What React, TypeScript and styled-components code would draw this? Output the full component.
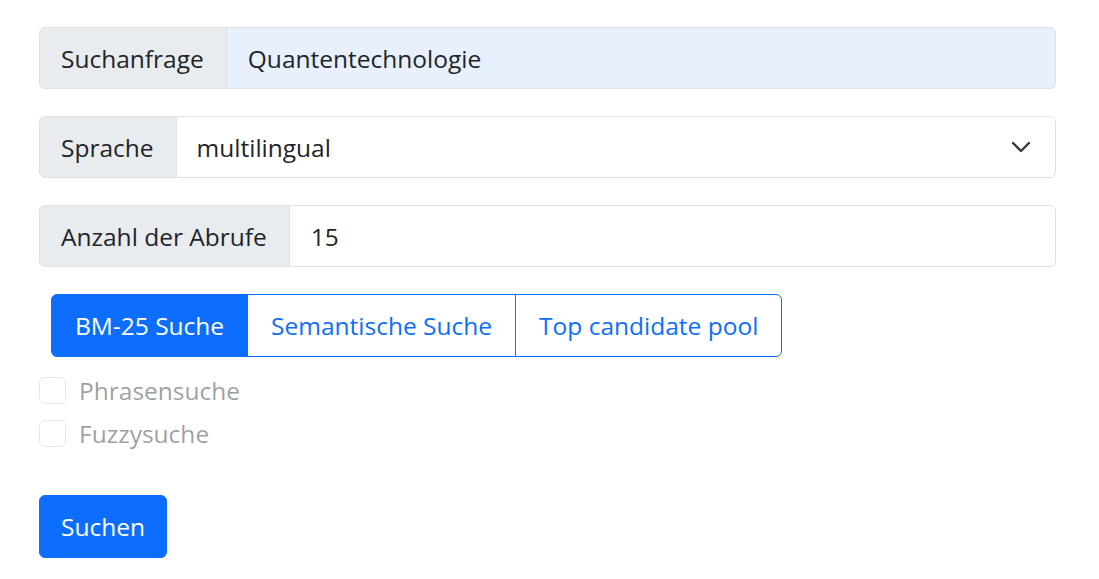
import React, { useState } from "react";
import styled, { createGlobalStyle } from "styled-components";

const GlobalStyle = createGlobalStyle`
  html, body {
    margin: 0;
    padding: 0;
    background: #fff;
  }
  body {
    font-family: "Open Sans", "Noto Sans", "Liberation Sans", sans-serif;
    color: #212529;
  }
  * {
    box-sizing: border-box;
  }
`;

const Page = styled.main`
  padding: 27px 43px 20px 39px;
  display: flex;
  flex-direction: column;
`;

const Form = styled.form`
  display: flex;
  flex-direction: column;
`;

const InputGroup = styled.div`
  display: flex;
  align-items: stretch;
  width: 100%;
  margin-bottom: 27px;
`;

const Addon = styled.span`
  flex: none;
  display: flex;
  align-items: center;
  padding: 13px 22px 11px 21px;
  font-size: 24.5px;
  line-height: 36px;
  color: #212529;
  background: #e9ecef;
  border: 1px solid #dee2e6;
  border-radius: 6px 0 0 6px;
  white-space: nowrap;
`;

const TextInput = styled.input<{ $filled?: boolean }>`
  flex: 1;
  min-width: 0;
  margin-left: -1px;
  padding: 13px 21px 11px;
  font: inherit;
  font-size: 24.5px;
  line-height: 36px;
  color: #212529;
  background: ${(p) => (p.$filled ? "#e8f0fe" : "#fff")};
  border: 1px solid #dee2e6;
  border-radius: 0 6px 6px 0;
  outline: none;
`;

const SelectWrap = styled.div`
  flex: 1;
  position: relative;
  display: flex;
  margin-left: -1px;
`;

const Select = styled.select`
  flex: 1;
  appearance: none;
  padding: 13px 60px 11px 20px;
  font: inherit;
  font-size: 24.5px;
  line-height: 36px;
  color: #212529;
  background: #fff;
  border: 1px solid #dee2e6;
  border-radius: 0 6px 6px 0;
  outline: none;
`;

const Chevron = styled.svg`
  position: absolute;
  right: 24px;
  top: 50%;
  width: 22px;
  height: 16px;
  transform: translateY(-50%);
  pointer-events: none;
`;

const ButtonGroup = styled.div`
  display: inline-flex;
  align-self: flex-start;
  margin-left: 12px;
  margin-bottom: 20px;
`;

const ToggleButton = styled.button<{ $active?: boolean }>`
  padding: 13px 23px 12px;
  font: inherit;
  font-size: 24.5px;
  line-height: 36px;
  color: ${(p) => (p.$active ? "#fff" : "#0d6efd")};
  background: ${(p) => (p.$active ? "#0d6efd" : "#fff")};
  border: 1px solid #0d6efd;
  border-radius: 0;
  cursor: pointer;
  & + & {
    margin-left: -1px;
  }
  &:first-child {
    border-radius: 6px 0 0 6px;
  }
  &:last-child {
    border-radius: 0 6px 6px 0;
  }
`;

const CheckRow = styled.label`
  display: flex;
  align-items: center;
  gap: 13px;
  height: 27px;
  margin-bottom: 16px;
  font-size: 24.5px;
  line-height: 36px;
  color: rgba(33, 37, 41, 0.45);
`;

const CheckBox = styled.input`
  appearance: none;
  margin: 0;
  width: 27px;
  height: 27px;
  border: 1px solid #e5e7ea;
  border-radius: 6px;
  background: #fff;
`;

const SubmitButton = styled.button`
  align-self: flex-start;
  margin-top: 32px;
  padding: 13px 21px 12px;
  font: inherit;
  font-size: 24.5px;
  line-height: 36px;
  color: #fff;
  background: #0d6efd;
  border: 1px solid #0d6efd;
  border-radius: 6px;
  cursor: pointer;
`;

const modes = ["BM-25 Suche", "Semantische Suche", "Top candidate pool"];

export default function App() {
  const [mode, setMode] = useState(0);
  return (
    <>
      <GlobalStyle />
      <Page>
        <Form onSubmit={(e) => e.preventDefault()}>
          <InputGroup>
            <Addon>Suchanfrage</Addon>
            <TextInput $filled defaultValue="Quantentechnologie" />
          </InputGroup>

          <InputGroup>
            <Addon>Sprache</Addon>
            <SelectWrap>
              <Select defaultValue="multilingual">
                <option value="multilingual">multilingual</option>
                <option value="de">deutsch</option>
                <option value="en">englisch</option>
              </Select>
              <Chevron viewBox="0 0 16 12" aria-hidden>
                <path
                  d="M2 3l6 6 6-6"
                  fill="none"
                  stroke="#343a40"
                  strokeWidth="1.8"
                  strokeLinecap="round"
                  strokeLinejoin="round"
                />
              </Chevron>
            </SelectWrap>
          </InputGroup>

          <InputGroup>
            <Addon>Anzahl der Abrufe</Addon>
            <TextInput type="text" defaultValue="15" />
          </InputGroup>

          <ButtonGroup>
            {modes.map((m, i) => (
              <ToggleButton
                key={m}
                type="button"
                $active={mode === i}
                onClick={() => setMode(i)}
              >
                {m}
              </ToggleButton>
            ))}
          </ButtonGroup>

          <CheckRow>
            <CheckBox type="checkbox" disabled />
            Phrasensuche
          </CheckRow>
          <CheckRow>
            <CheckBox type="checkbox" disabled />
            Fuzzysuche
          </CheckRow>

          <SubmitButton type="submit">Suchen</SubmitButton>
        </Form>
      </Page>
    </>
  );
}
